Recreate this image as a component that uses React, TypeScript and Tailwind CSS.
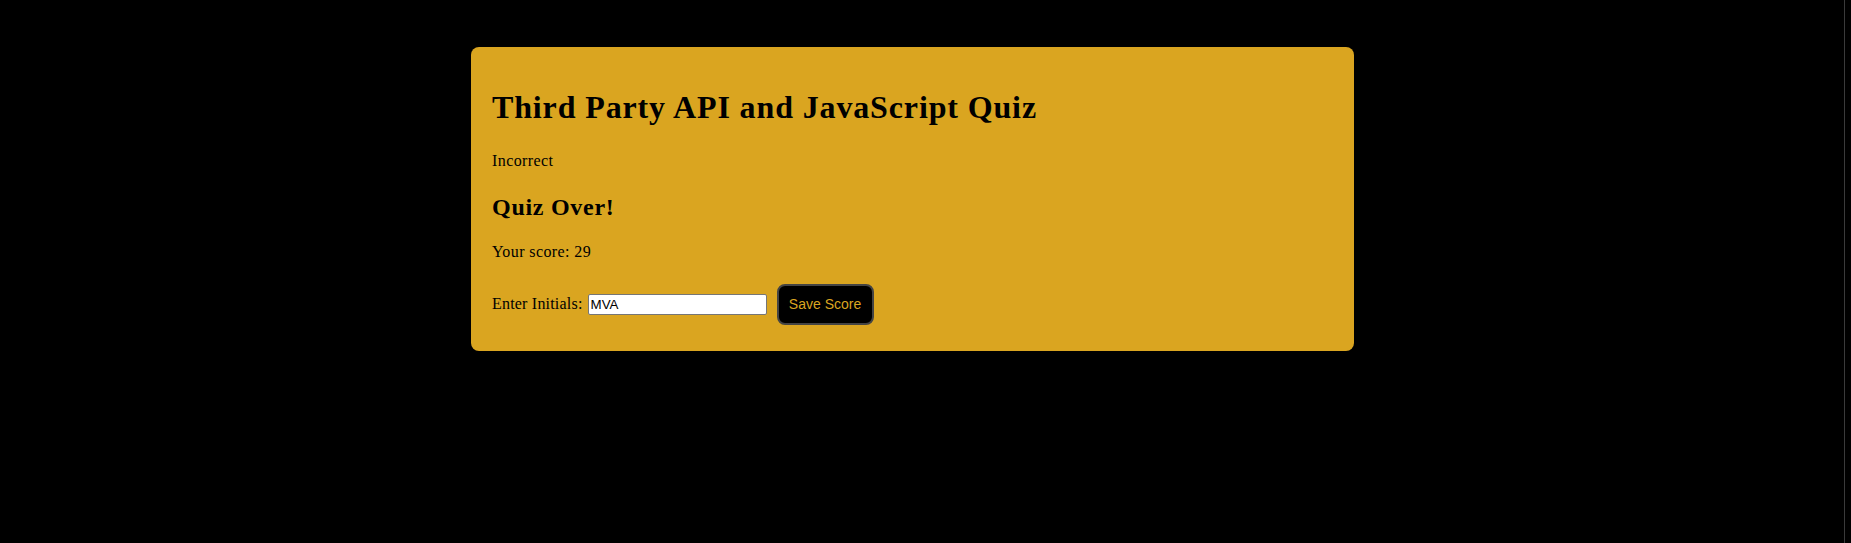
import { useState } from 'react';

const serif = { fontFamily: '"Liberation Serif", "Times New Roman", serif' };

export default function App() {
  const [initials, setInitials] = useState('MVA');

  return (
    <div className="flex min-h-screen bg-black text-black" style={serif}>
      <main className="flex-1 pr-[19px]">
        <section className="mx-auto mt-[47px] w-[883px] rounded-lg bg-[#daa520] px-[21px] pt-[20px] pb-[26px] tracking-wide">
          {/* Header */}
          <h1 className="mt-[22px] text-[32px] font-bold leading-[37px] tracking-[0.027em]">
            Third Party API and JavaScript Quiz
          </h1>
          <p className="mt-[26px] text-[16px] leading-[18px]">Incorrect</p>

          {/* Result */}
          <h2 className="mt-[23px] text-[24px] font-bold leading-[28px] tracking-[0.03em]">
            Quiz Over!
          </h2>
          <p className="mt-[22px] text-[16px] leading-[18px]">Your score: 29</p>

          {/* Save form */}
          <form
            className="mt-[23px] flex items-baseline"
            onSubmit={(e) => e.preventDefault()}
          >
            <label htmlFor="initials" className="text-[16px] leading-[18px] tracking-[0.0125em]">
              Enter Initials:
            </label>
            <input
              id="initials"
              value={initials}
              onChange={(e) => setInitials(e.target.value)}
              className="ml-[5px] h-[21px] w-[179px] rounded-[2px] border border-[#767676] bg-white px-[2px] text-[13.33px] tracking-normal text-black font-['Liberation_Sans',Arial,sans-serif]"
            />
            <button
              type="submit"
              className="ml-[10px] h-[41px] w-[97px] rounded-lg border-2 border-[#444] bg-black text-[14px] leading-[17px] tracking-normal text-[#daa520] font-['Liberation_Sans',Arial,sans-serif]"
            >
              Save Score
            </button>
          </form>
        </section>
      </main>
      <aside className="w-[7px] border-l border-[#3a3a3a]" />
    </div>
  );
}
